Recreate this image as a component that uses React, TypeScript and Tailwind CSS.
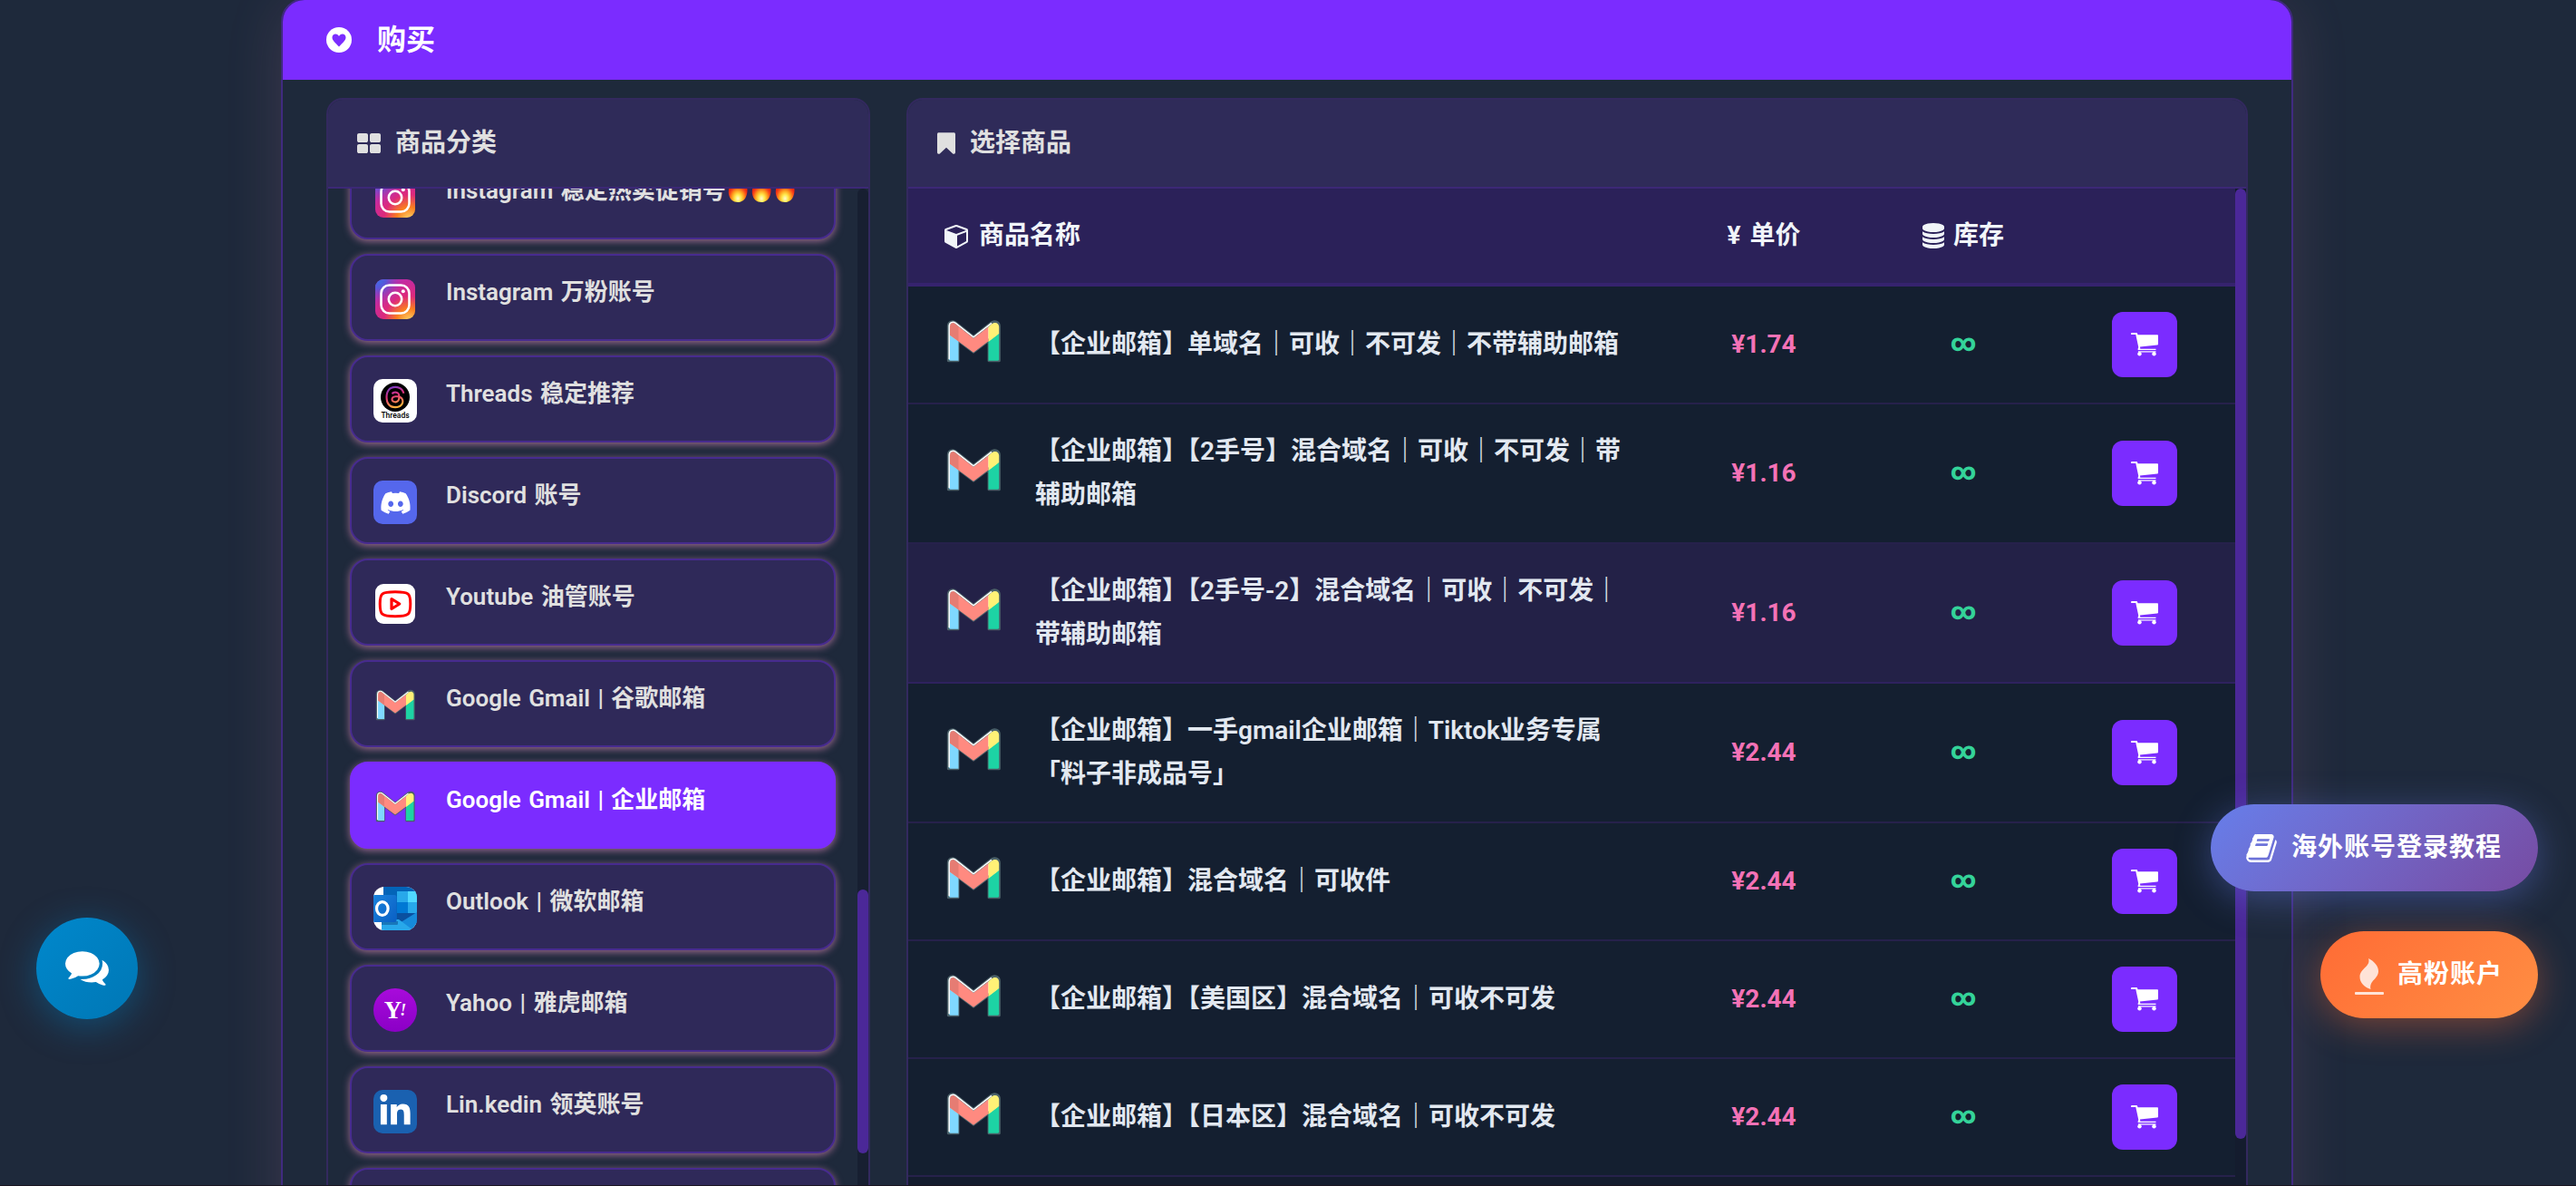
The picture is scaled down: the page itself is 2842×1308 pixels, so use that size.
import type { ReactNode } from 'react';
import { FaDiscord, FaLinkedinIn } from 'react-icons/fa';
import { FaThreads } from 'react-icons/fa6';

const FONT = 'font-[Roboto,"Noto_Sans_CJK_SC",sans-serif]';

const PATHS = {
  grid: 'M832 1024v384q0 52-38 90t-90 38h-512q-52 0-90-38t-38-90v-384q0-52 38-90t90-38h512q52 0 90 38t38 90zm0-768v384q0 52-38 90t-90 38h-512q-52 0-90-38t-38-90v-384q0-52 38-90t90-38h512q52 0 90 38t38 90zm896 768v384q0 52-38 90t-90 38h-512q-52 0-90-38t-38-90v-384q0-52 38-90t90-38h512q52 0 90 38t38 90zm0-768v384q0 52-38 90t-90 38h-512q-52 0-90-38t-38-90v-384q0-52 38-90t90-38h512q52 0 90 38t38 90z',
  bookmark:
    'M1164 0q23 0 44 9 33 13 52.5 41t19.5 62v1289q0 34-19.5 62t-52.5 41q-19 8-44 8-48 0-83-32l-441-424-441 424q-36 33-83 33-23 0-44-9-33-13-52.5-41t-19.5-62v-1289q0-34 19.5-62t52.5-41q21-9 44-9h1048z',
  cube: 'M832 1629l640-349v-636l-640 233v752zm-64-865l698-254-698-254-698 254zm832-252v768q0 35-18 65t-49 47l-704 384q-28 16-61 16t-61-16l-704-384q-31-17-49-47t-18-65v-768q0-40 23-73t61-50l704-256q22-8 44-8t44 8l704 256q38 17 61 50t23 73z',
  database:
    'M768 768q237 0 443-43t325-127v170q0 69-103 128t-280 93.5-385 34.5-385-34.5-280-93.5-103-128v-170q119 84 325 127t443 43zm0 768q237 0 443-43t325-127v170q0 69-103 128t-280 93.5-385 34.5-385-34.5-280-93.5-103-128v-170q119 84 325 127t443 43zm0-384q237 0 443-43t325-127v170q0 69-103 128t-280 93.5-385 34.5-385-34.5-280-93.5-103-128v-170q119 84 325 127t443 43zm0-1152q208 0 385 34.5t280 93.5 103 128v128q0 69-103 128t-280 93.5-385 34.5-385-34.5-280-93.5-103-128v-128q0-69 103-128t280-93.5 385-34.5z',
  book: 'M1703 478q40 57 18 129l-275 906q-19 64-76.5 107.5t-122.5 43.5h-923q-77 0-148.5-53.5t-99.5-131.5q-24-67-2-127 0-4 3-27t4-37q1-8-3-21.5t-3-19.5q2-11 8-21t16.5-23.5 16.5-23.5q23-38 45-91.5t30-91.5q3-10 .5-30t-.5-28q3-11 17-28t17-23q21-36 42-92t25-90q1-9-2.5-32t.5-28q4-13 22-30.5t22-22.5q19-26 42.5-84.5t27.5-96.5q1-8-3-25.5t-2-26.5q2-8 9-18t18-23 17-21q8-12 16.5-30.5t15-35 16-36 19.5-32 26.5-23.5 36-11.5 47.5 5.5l-1 3q38-9 51-9h761q74 0 114 56t18 130l-274 906q-36 119-71.5 153.5t-128.5 34.5h-869q-27 0-38 15-11 16-1 43 24 70 144 70h923q29 0 56-15.5t35-41.5l300-987q7-22 5-57 38 15 59 43zm-1064 2q-4 13 2 22.5t20 9.5h608q13 0 25.5-9.5t16.5-22.5l21-64q4-13-2-22.5t-20-9.5h-608q-13 0-25.5 9.5t-16.5 22.5zm-83 256q-4 13 2 22.5t20 9.5h608q13 0 25.5-9.5t16.5-22.5l21-64q4-13-2-22.5t-20-9.5h-608q-13 0-25.5 9.5t-16.5 22.5z',
  comments:
    'M1408 768q0 139-94 257t-256.5 186.5-353.5 68.5q-86 0-176-16-124 88-278 128-36 9-86 16h-3q-11 0-20.5-8t-11.5-21q-1-3-1-6.5t.5-6.5 2-6l2.5-5 3.5-5.5 4-5 4.5-5 4-4.5q5-6 23-25t26-29.5 22.5-29 25-38.5 20.5-44q-124-72-195-177t-71-224q0-139 94-257t256.5-186.5 353.5-68.5 353.5 68.5 256.5 186.5 94 257zm384 256q0 120-71 224.5t-195 176.5q10 24 20.5 44t25 38.5 22.5 29 26 29.5 23 25q1 1 4 4.5t4.5 5 4 5 3.5 5.5l2.5 5 2 6 .5 6.5-1 6.5q-3 14-13 22t-22 7q-50-7-86-16-154-40-278-128-90 16-176 16-271 0-472-132 58 4 88 4 161 0 309-45t264-129q125-92 192-212t67-254q0-77-23-152 129 71 204 178t75 230z',
};

interface GlyphProps {
  d: string;
  viewBox: string;
  className: string;
}

function Glyph({ d, viewBox, className }: GlyphProps) {
  return (
    <svg viewBox={viewBox} fill="currentColor" className={`shrink-0 ${className}`}>
      <path d={d} />
    </svg>
  );
}

function HeartIcon() {
  return (
    <svg viewBox="0 0 28 28" className="size-7 shrink-0">
      <circle cx="14" cy="14" r="14" fill="#fff" />
      <path
        d="M14 21.5C10 17.500 6.500 14.500 6.500 11.300C6.500 9.200 8.200 7.600 10.200 7.600C12 7.600 13.300 8.600 14 10C14.700 8.600 16 7.600 17.800 7.600C19.800 7.600 21.500 9.200 21.500 11.300C21.500 14.500 18 17.500 14 21.500Z"
        fill="#7b2cff"
      />
    </svg>
  );
}

function GmailIcon({ className }: { className: string }) {
  return (
    <svg viewBox="0 0 48 48" className={`shrink-0 ${className}`}>
      <path
        d="M4 39V11.500C4 8.200 7.200 7 9.500 8.800L24 20.200L38.500 8.800C40.800 7 44.500 8.200 44.500 11.500V39H36.500V22.500L24 32L11.500 22.500V39Z"
        fill="#fff"
        stroke="#4a6068"
        strokeWidth="2.400"
        strokeLinejoin="round"
      />
      <path d="M4.800 18L12 23.500V39H5.500Q4.300 39 4.300 38Z" fill="#7fd8ff" />
      <path d="M36 23.500L44.500 17V38Q44.500 39 43.500 39H36Z" fill="#1dd3a4" />
      <path d="M5.200 11.500C5.200 9 7.600 8.200 9.500 9.800L24 21L36 12V23.500L24 32.500L5 18.500Z" fill="#ff8a80" />
      <path d="M5.200 11.500C5.200 9 7.600 8.200 9.500 9.800L12 11.700V23.500L5 18.500Z" fill="#e67c73" />
      <path d="M36 11.900L39 9.500C41.500 7.700 44.500 9 44.500 12V17.500L36 24Z" fill="#fff176" />
      <path d="M4.500 38V11.500C4.500 8.500 7.500 7.300 9.700 9L24 20.300L38.500 9" fill="none" stroke="#fff" strokeWidth="1.100" />
    </svg>
  );
}

function InstagramIcon() {
  return (
    <svg viewBox="0 0 48 48" className="size-12 shrink-0">
      <defs>
        <radialGradient id="ig-warm" cx="0.85" cy="1.05" r="1.050">
          <stop offset="0" stopColor="#ffd86b" />
          <stop offset="0.300" stopColor="#fa7e1e" />
          <stop offset="0.600" stopColor="#dd2a7b" />
          <stop offset="1" stopColor="#c32aa3" />
        </radialGradient>
        <radialGradient id="ig-cool" cx="0.050" cy="0" r="0.750">
          <stop offset="0" stopColor="#3771e8" />
          <stop offset="0.300" stopColor="#5a55d8" />
          <stop offset="1" stopColor="#d6249f" stopOpacity="0" />
        </radialGradient>
      </defs>
      <rect x="2" y="2" width="44" height="44" rx="9" fill="url(#ig-warm)" />
      <rect x="2" y="2" width="44" height="44" rx="9" fill="url(#ig-cool)" />
      <rect x="8.500" y="8.500" width="31" height="31" rx="9" fill="none" stroke="#fff" strokeWidth="2.600" />
      <circle cx="24" cy="24" r="7.200" fill="none" stroke="#fff" strokeWidth="2.600" />
      <circle cx="32.800" cy="15.300" r="2" fill="#fff" />
    </svg>
  );
}

function ThreadsIcon() {
  return (
    <div className="flex size-12 shrink-0 flex-col items-center rounded-[10px] bg-white pt-1">
      <div className="flex size-8 items-center justify-center rounded-full bg-black">
        <svg width="0" height="0" className="absolute">
          <linearGradient id="threads" x1="0" y1="0" x2="0.300" y2="1">
            <stop offset="0" stopColor="#5b3fd6" />
            <stop offset="0.500" stopColor="#e0317d" />
            <stop offset="1" stopColor="#ffb13d" />
          </linearGradient>
        </svg>
        <FaThreads size={26} fill="url(#threads)" />
      </div>
      <span className="text-[8.500px] leading-[9px] font-medium text-black">Threads</span>
    </div>
  );
}

function DiscordIcon() {
  return (
    <div className="flex size-12 shrink-0 items-center justify-center rounded-[10px] bg-[#5567ec]">
      <FaDiscord className="size-[35px] text-white" />
    </div>
  );
}

function YoutubeIcon() {
  return (
    <svg viewBox="0 0 48 48" className="size-12 shrink-0">
      <rect x="2" y="2" width="44" height="44" rx="9" fill="#fff" />
      <path
        d="M7.200 24C7.200 12.500 8.500 10.700 24 10.700S40.800 12.500 40.800 24S39.500 37.800 24 37.800S7.200 35.500 7.200 24Z"
        fill="none"
        stroke="#f00"
        strokeWidth="3"
      />
      <path d="M20 18.500L28.800 24L20 29.500Z" fill="#fff" stroke="#f00" strokeWidth="3.200" strokeLinejoin="round" />
    </svg>
  );
}

function OutlookIcon() {
  return (
    <svg viewBox="0 0 48 48" className="size-12 shrink-0 rounded-[12px] bg-white">
      <defs>
        <linearGradient id="outlook" x1="0" y1="0" x2="1" y2="1">
          <stop offset="0" stopColor="#1a83dd" />
          <stop offset="1" stopColor="#0a5fc4" />
        </linearGradient>
      </defs>
      <rect x="11" y="0" width="37" height="40" fill="#0364b8" />
      <rect x="26" y="5" width="12" height="12" fill="#28a8ea" />
      <rect x="38" y="5" width="10" height="12" fill="#50d9ff" />
      <rect x="26" y="17" width="12" height="12" fill="#0078d4" />
      <rect x="38" y="17" width="10" height="12" fill="#28a8ea" />
      <path d="M26 29H48V40H26Z" fill="#0a50a0" />
      <path d="M48 28L24 43V48H48Z" fill="#168adb" />
      <path d="M9 36H28L44 48H9Z" fill="#28a8ea" />
      <path d="M9 38H27V41Q27 42 25.500 42H9Z" fill="#0b4f8f" opacity="0.550" />
      <path d="M0 9H23Q25.500 9 25.500 11.500V36.500Q25.500 39 23 39H0Z" fill="url(#outlook)" />
      <ellipse cx="9.800" cy="24" rx="6.300" ry="7.400" fill="none" stroke="#fff" strokeWidth="3.200" />
    </svg>
  );
}

function YahooIcon() {
  return (
    <div className="flex size-12 shrink-0 items-center justify-center rounded-full bg-linear-to-b from-[#a80bdb] to-[#8b00c6] pb-px font-['Liberation_Serif',serif] text-white">
      <span className="text-[27px] leading-[48px] font-bold">Y</span>
      <span className="-ml-0.5 text-[18px] leading-[20px] font-bold italic">!</span>
    </div>
  );
}

function LinkedinIcon() {
  return (
    <div className="flex size-12 shrink-0 items-center justify-center rounded-[10px] bg-[#1a61b0]">
      <FaLinkedinIn className="size-[38px] text-white" />
    </div>
  );
}

function FireIcon() {
  return (
    <svg viewBox="0 0 26 28" className="h-7 w-[26px] shrink-0">
      <defs>
        <radialGradient id="fire" cx="0.5" cy="0.850" r="0.550">
          <stop offset="0" stopColor="#fffbd0" />
          <stop offset="0.300" stopColor="#ffe94c" />
          <stop offset="0.600" stopColor="#ff9a1c" />
          <stop offset="0.850" stopColor="#f8461a" />
          <stop offset="1" stopColor="#ee2a10" />
        </radialGradient>
      </defs>
      <path
        d="M12 0C15 4 19 6 19.500 11C21 10 21.500 8 21 6.500C23.500 10 24 14 23 18C21.500 24.500 17.500 27 13 27C8 27 4 24 3 18C2.300 14 3.500 10 5 8C5 10 6 11.500 7 12C7 7 12 5 12 0Z"
        fill="url(#fire)"
      />
    </svg>
  );
}

function CartIcon() {
  return (
    <svg viewBox="0 0 30 26" fill="#fff" className="h-[26px] w-[30px]">
      <path d="M0 .9Q0 0 1 0H6Q7 0 7.200 1L7.500 2.300H29.200Q30 2.300 30 3.200V12.500Q30 13.400 29 13.500L10 15.500L10.300 17.800H27.500V19.100H8.200Q7.300 19.100 7.600 18L8.300 16L5.300 2.100H1Q0 2.100 0 .9Z" />
      <path d="M8 20.300H27.500V21.500H8Z" />
      <circle cx="9.500" cy="23.300" r="2.200" />
      <circle cx="25.500" cy="23.300" r="2.200" />
    </svg>
  );
}

function FlameIcon() {
  return (
    <svg viewBox="0 0 32 40" fill="#fff" className="mt-1 h-10 w-8 opacity-80">
      <path d="M15 0C21 3 26 8 26 14C26 23 15.500 24 17.500 34C10 31.500 5.500 26.500 5.500 20.500C5.500 11 18 9 15 0Z" />
      <rect x="0" y="37" width="32" height="3" rx="1" />
    </svg>
  );
}

interface Category {
  name: string;
  icon: ReactNode;
  active?: boolean;
  fires?: number;
}

const categories: Category[] = [
  { name: 'Instagram 稳定热卖促销号', icon: <InstagramIcon />, fires: 3 },
  { name: 'Instagram 万粉账号', icon: <InstagramIcon /> },
  { name: 'Threads 稳定推荐', icon: <ThreadsIcon /> },
  { name: 'Discord 账号', icon: <DiscordIcon /> },
  { name: 'Youtube 油管账号', icon: <YoutubeIcon /> },
  { name: 'Google Gmail | 谷歌邮箱', icon: <GmailIcon className="size-12" /> },
  { name: 'Google Gmail | 企业邮箱', icon: <GmailIcon className="size-12" />, active: true },
  { name: 'Outlook | 微软邮箱', icon: <OutlookIcon /> },
  { name: 'Yahoo | 雅虎邮箱', icon: <YahooIcon /> },
  { name: 'Lin.kedin 领英账号', icon: <LinkedinIcon /> },
  { name: '', icon: null },
];

interface Product {
  lines: string[];
  price: string;
  hover?: boolean;
}

const products: Product[] = [
  { lines: ['【企业邮箱】单域名｜可收｜不可发｜不带辅助邮箱'], price: '1.74' },
  { lines: ['【企业邮箱】【2手号】混合域名｜可收｜不可发｜带', '辅助邮箱'], price: '1.16' },
  { lines: ['【企业邮箱】【2手号-2】混合域名｜可收｜不可发｜', '带辅助邮箱'], price: '1.16', hover: true },
  { lines: ['【企业邮箱】一手gmail企业邮箱｜Tiktok业务专属', '「料子非成品号」'], price: '2.44' },
  { lines: ['【企业邮箱】混合域名｜可收件'], price: '2.44' },
  { lines: ['【企业邮箱】【美国区】混合域名｜可收不可发'], price: '2.44' },
  { lines: ['【企业邮箱】【日本区】混合域名｜可收不可发'], price: '2.44' },
];

function CategoryCard({ name, icon, active, fires = 0 }: Category) {
  return (
    <div
      className={`flex h-24 shrink-0 rounded-[20px] border-2 px-6 pt-6 shadow-[0_2px_8px_rgba(244,150,200,0.6)] ${
        active ? 'border-[#7b2cff] bg-[#7b2cff] text-white' : 'border-[#472b8f] bg-[#2f2959] text-[#e0e0e0]'
      }`}
    >
      {icon}
      <div className="mt-0.5 ml-8 flex h-7 items-center text-[26px] leading-7 font-semibold [word-spacing:2px] whitespace-pre">
        {name}
        {Array.from({ length: fires }, (_, i) => (
          <FireIcon key={i} />
        ))}
      </div>
    </div>
  );
}

function ProductRow({ lines, price, hover }: Product) {
  return (
    <div
      className={`flex items-center border-b-2 py-7 ${
        hover ? 'border-[#2e225e] bg-[#232147]' : 'border-[#26214b] bg-[#141f30]'
      }`}
    >
      <div className="flex w-[824px] items-center pl-[39px]">
        <GmailIcon className="-mt-1.5 size-[66px]" />
        <div className="ml-[35px] text-[28px] leading-[48px] font-semibold whitespace-nowrap text-[#e2e8f0]">
          {lines.map((line) => (
            <div key={line}>{line}</div>
          ))}
        </div>
      </div>
      <div className="w-60 text-center text-[28px] font-bold text-[#f472b6]">¥{price}</div>
      <div className="w-[200px] pb-1 text-center text-[27px] leading-10 font-black text-[#34d399]">∞</div>
      <div className="flex w-[200px] justify-center">
        <button className="flex size-[72px] items-center justify-center rounded-xl bg-[#7b2cff]">
          <CartIcon />
        </button>
      </div>
    </div>
  );
}

function PanelHeader({ children }: { children: ReactNode }) {
  return (
    <div className="flex h-[98px] shrink-0 items-center border-b-2 border-[#3c2876] bg-[#2f2b59] pl-8 text-[28px] font-bold text-[#e0e0e0]">
      {children}
    </div>
  );
}

function App() {
  return (
    <div className={`relative h-[1308px] w-[2842px] overflow-hidden bg-[#1e293b] pl-[310px] ${FONT}`}>
      <div className="-mt-0.5 flex h-[1400px] w-[2220px] flex-col overflow-hidden rounded-[26px] border-2 border-[#402a80] bg-[#1e293b] shadow-[0_8px_64px_rgba(244,150,190,0.14)]">
        <div className="flex h-[88px] shrink-0 items-center bg-[#7b2cff] pb-px pl-12 text-[32px] font-bold text-white">
          <HeartIcon />
          <span className="ml-7">购买</span>
        </div>
        <div className="flex grow gap-10 px-12 pt-5">
          <div className="flex w-[600px] flex-col overflow-hidden rounded-[18px] border-2 border-[#33295f]">
            <PanelHeader>
              <Glyph d={PATHS.grid} viewBox="64 128 1664 1408" className="h-[22px] w-[26px]" />
              <span className="ml-4">商品分类</span>
            </PanelHeader>
            <div className="flex h-[1200px] justify-between overflow-hidden pl-6">
              <div className="-mt-10 flex w-[536px] flex-col gap-4">
                {categories.map((category) => (
                  <CategoryCard key={category.name} {...category} />
                ))}
              </div>
              <div className="w-3 rounded-t-md bg-[#171f31] pt-[773px]">
                <div className="h-[291px] rounded-md bg-[#4b2898]" />
              </div>
            </div>
          </div>
          <div className="flex w-[1480px] flex-col overflow-hidden rounded-[18px] border-2 border-[#33295f]">
            <PanelHeader>
              <Glyph d={PATHS.bookmark} viewBox="0 0 1280 1520" className="h-6 w-5" />
              <span className="ml-4">选择商品</span>
            </PanelHeader>
            <div className="flex h-[1200px] overflow-hidden bg-[#141c2e]">
              <div className="w-[1464px]">
                <div className="flex h-[108px] items-center border-b-4 border-[#36236e] bg-[#2b2159] text-[28px] font-bold text-[#f1f5f9]">
                  <div className="flex w-[824px] items-center pl-10">
                    <Glyph d={PATHS.cube} viewBox="-64 0 1664 1792" className="h-7 w-[26px]" />
                    <span className="ml-3">商品名称</span>
                  </div>
                  <div className="w-60 text-center [word-spacing:3px]">¥ 单价</div>
                  <div className="flex w-[200px] items-center justify-center">
                    <Glyph d={PATHS.database} viewBox="0 0 1536 1792" className="h-7 w-6" />
                    <span className="ml-2.5">库存</span>
                  </div>
                </div>
                {products.map((product) => (
                  <ProductRow key={product.lines[0]} {...product} />
                ))}
                <div className="h-40 bg-[#141c2e]" />
              </div>
              <div className="h-[1048px] w-3 rounded-md bg-[#4b2898]" />
            </div>
          </div>
        </div>
      </div>

      <div className="absolute top-[1012px] left-10 flex size-28 items-center justify-center rounded-full bg-linear-135 from-[#0088cc] to-[#0077b5] text-white shadow-[0_8px_40px_rgba(0,136,204,0.4)]">
        <Glyph d={PATHS.comments} viewBox="0 256 1792 1408" className="h-[38px] w-12" />
      </div>
      <div className="absolute top-[887px] left-[2439px] flex h-24 w-[361px] items-center rounded-full bg-linear-135 from-[#667eea] to-[#764ba2] pl-[39px] text-[28px] font-bold tracking-[1px] whitespace-nowrap text-white shadow-[0_8px_40px_rgba(102,126,234,0.4)]">
        <Glyph d={PATHS.book} viewBox="64 128 1664 1536" className="h-[31px] w-[34px]" />
        <span className="ml-4">海外账号登录教程</span>
      </div>
      <div className="absolute top-[1027px] left-[2560px] flex h-24 w-60 items-center rounded-full bg-linear-135 from-[#ff6b35] to-[#ff8e43] pl-[38px] text-[28px] font-bold tracking-[1px] whitespace-nowrap text-white shadow-[0_8px_40px_rgba(255,107,53,0.4)]">
        <FlameIcon />
        <span className="ml-[15px]">高粉账户</span>
      </div>
      <div className="absolute inset-x-0 bottom-0 h-px bg-[#1a1420]" />
    </div>
  );
}

export default App;
